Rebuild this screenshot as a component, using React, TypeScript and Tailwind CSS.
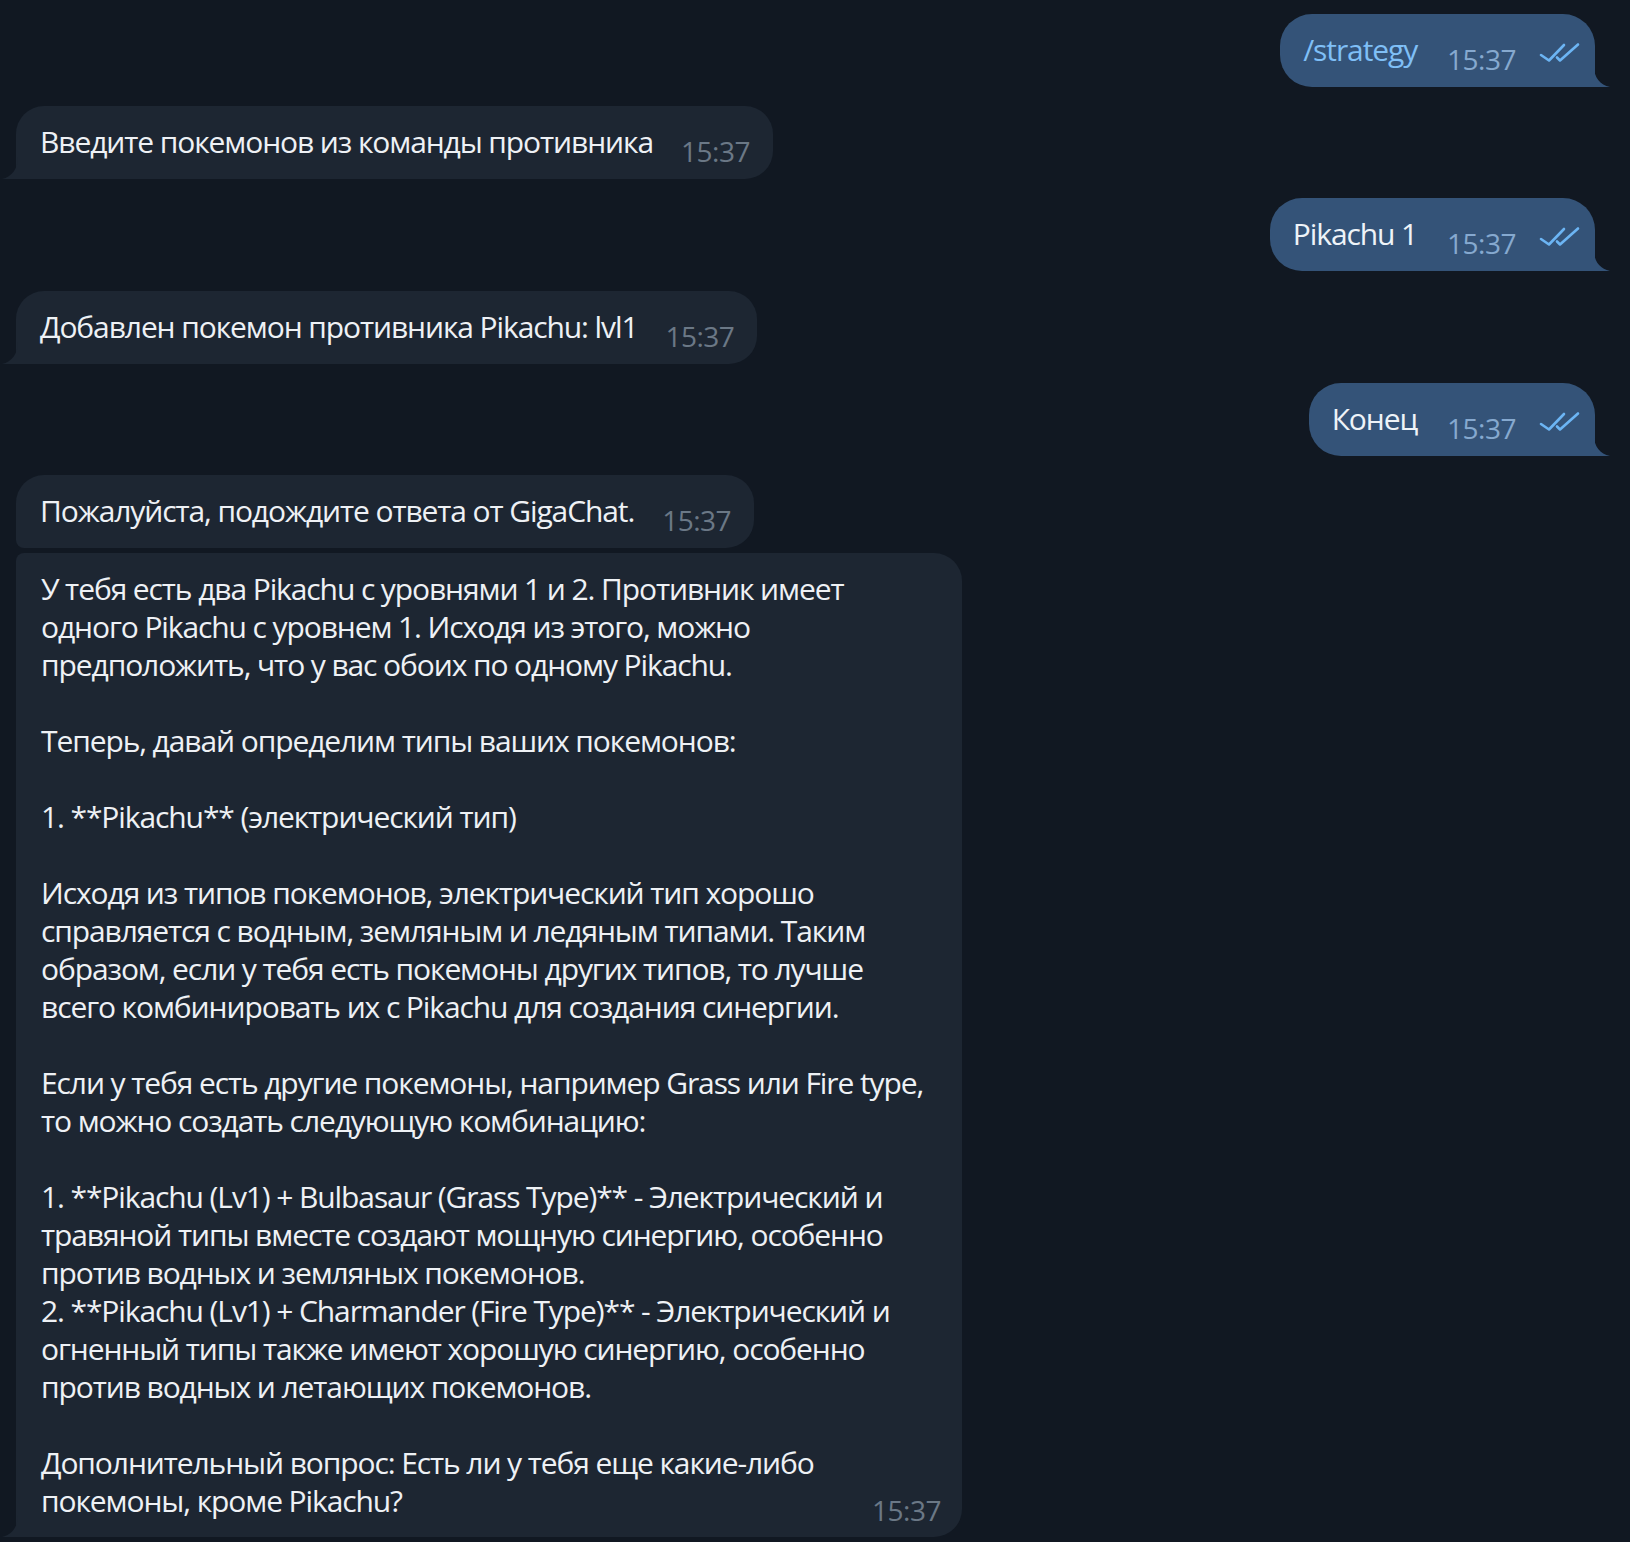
import React from "react";

const Checks = () => (
  <svg width="42" height="22" viewBox="0 0 42 22" fill="none" className="ml-[22px] mb-[6px] shrink-0">
    <path d="M3 14 L11 19.5 L26 4" stroke="#6cb5f4" strokeWidth="2.6" strokeLinecap="round" strokeLinejoin="round" />
    <path d="M19 16.5 L22 19.5 L40 3.5" stroke="#6cb5f4" strokeWidth="2.6" strokeLinecap="round" strokeLinejoin="round" />
  </svg>
);

const OutTail = () => (
  <svg width="16" height="20" viewBox="0 0 16 20" className="absolute right-[-15px] bottom-0">
    <path d="M0 0 C0 10 6 18 16 20 L0 20 Z" fill="#345378" />
  </svg>
);

const InTail = () => (
  <svg width="16" height="22" viewBox="0 0 16 22" className="absolute left-[-14px] bottom-0">
    <path d="M16 0 C16 11 10 20 0 22 L16 22 Z" fill="#1d2632" />
  </svg>
);

const Outgoing = ({ text, link }: { text: string; link?: boolean }) => (
  <div className="flex justify-end pr-[35px]">
    <div className="relative flex items-end bg-[#345378] rounded-[32px] rounded-br-none pl-[23px] pr-[15px] pt-[17px] pb-[18px]">
      <span className={`text-[30px] leading-[38px] tracking-[-1.1px] ${link ? "text-[#7fbff6]" : "text-[#eef3f8]"}`}>{text}</span>
      <span className="ml-[30px] text-[28px] leading-[20px] tracking-[-0.5px] text-[#86a9cf]">15:37</span>
      <Checks />
      <OutTail />
    </div>
  </div>
);

const Incoming = ({ text, tail = true }: { text: string; tail?: boolean }) => (
  <div className="flex pl-[16px]">
    <div
      className={`relative flex items-end bg-[#1d2632] rounded-[28px] pl-[24px] pr-[23px] pt-[17px] pb-[18px] ${
        tail ? "rounded-bl-none" : "rounded-bl-[8px]"
      }`}
    >
      <span className="text-[30px] leading-[38px] tracking-[-1.1px] text-[#eef1f5]">{text}</span>
      <span className="ml-[28px] text-[28px] leading-[20px] tracking-[-0.5px] text-[#6b7886]">15:37</span>
      {tail && <InTail />}
    </div>
  </div>
);

const LONG = `У тебя есть два Pikachu с уровнями 1 и 2. Противник имеет
одного Pikachu с уровнем 1. Исходя из этого, можно
предположить, что у вас обоих по одному Pikachu.

Теперь, давай определим типы ваших покемонов:

1. **Pikachu** (электрический тип)

Исходя из типов покемонов, электрический тип хорошо
справляется с водным, земляным и ледяным типами. Таким
образом, если у тебя есть покемоны других типов, то лучше
всего комбинировать их с Pikachu для создания синергии.

Если у тебя есть другие покемоны, например Grass или Fire type,
то можно создать следующую комбинацию:

1. **Pikachu (Lv1) + Bulbasaur (Grass Type)** - Электрический и
травяной типы вместе создают мощную синергию, особенно
против водных и земляных покемонов.
2. **Pikachu (Lv1) + Charmander (Fire Type)** - Электрический и
огненный типы также имеют хорошую синергию, особенно
против водных и летающих покемонов.

Дополнительный вопрос: Есть ли у тебя еще какие-либо`;

export default function App() {
  return (
    <div className="min-h-screen bg-[#111822] font-['Open_Sans',sans-serif] overflow-hidden">
      <div className="flex flex-col pt-[14px]">
        <Outgoing text="/strategy" link />
        <div className="mt-[19px]">
          <Incoming text="Введите покемонов из команды противника" />
        </div>
        <div className="mt-[19px]">
          <Outgoing text="Pikachu 1" />
        </div>
        <div className="mt-[20px]">
          <Incoming text="Добавлен покемон противника Pikachu: lvl1" />
        </div>
        <div className="mt-[19px]">
          <Outgoing text="Конец" />
        </div>
        <div className="mt-[19px]">
          <Incoming text="Пожалуйста, подождите ответа от GigaChat." tail={false} />
        </div>
        <div className="mt-[5px] flex pl-[16px]">
          <div className="relative w-[946px] bg-[#1d2632] rounded-[28px] rounded-tl-[8px] rounded-bl-none pl-[25px] pr-[21px] pt-[17px] pb-[17px] text-[30px] leading-[38px] tracking-[-1.1px] text-[#eef1f5]">
            <p className="whitespace-pre">{LONG}</p>
            <div className="flex items-end justify-between">
              <span>покемоны, кроме Pikachu?</span>
              <span className="text-[28px] leading-[20px] tracking-[-0.5px] text-[#6b7886]">15:37</span>
            </div>
            <InTail />
          </div>
        </div>
      </div>
    </div>
  );
}
